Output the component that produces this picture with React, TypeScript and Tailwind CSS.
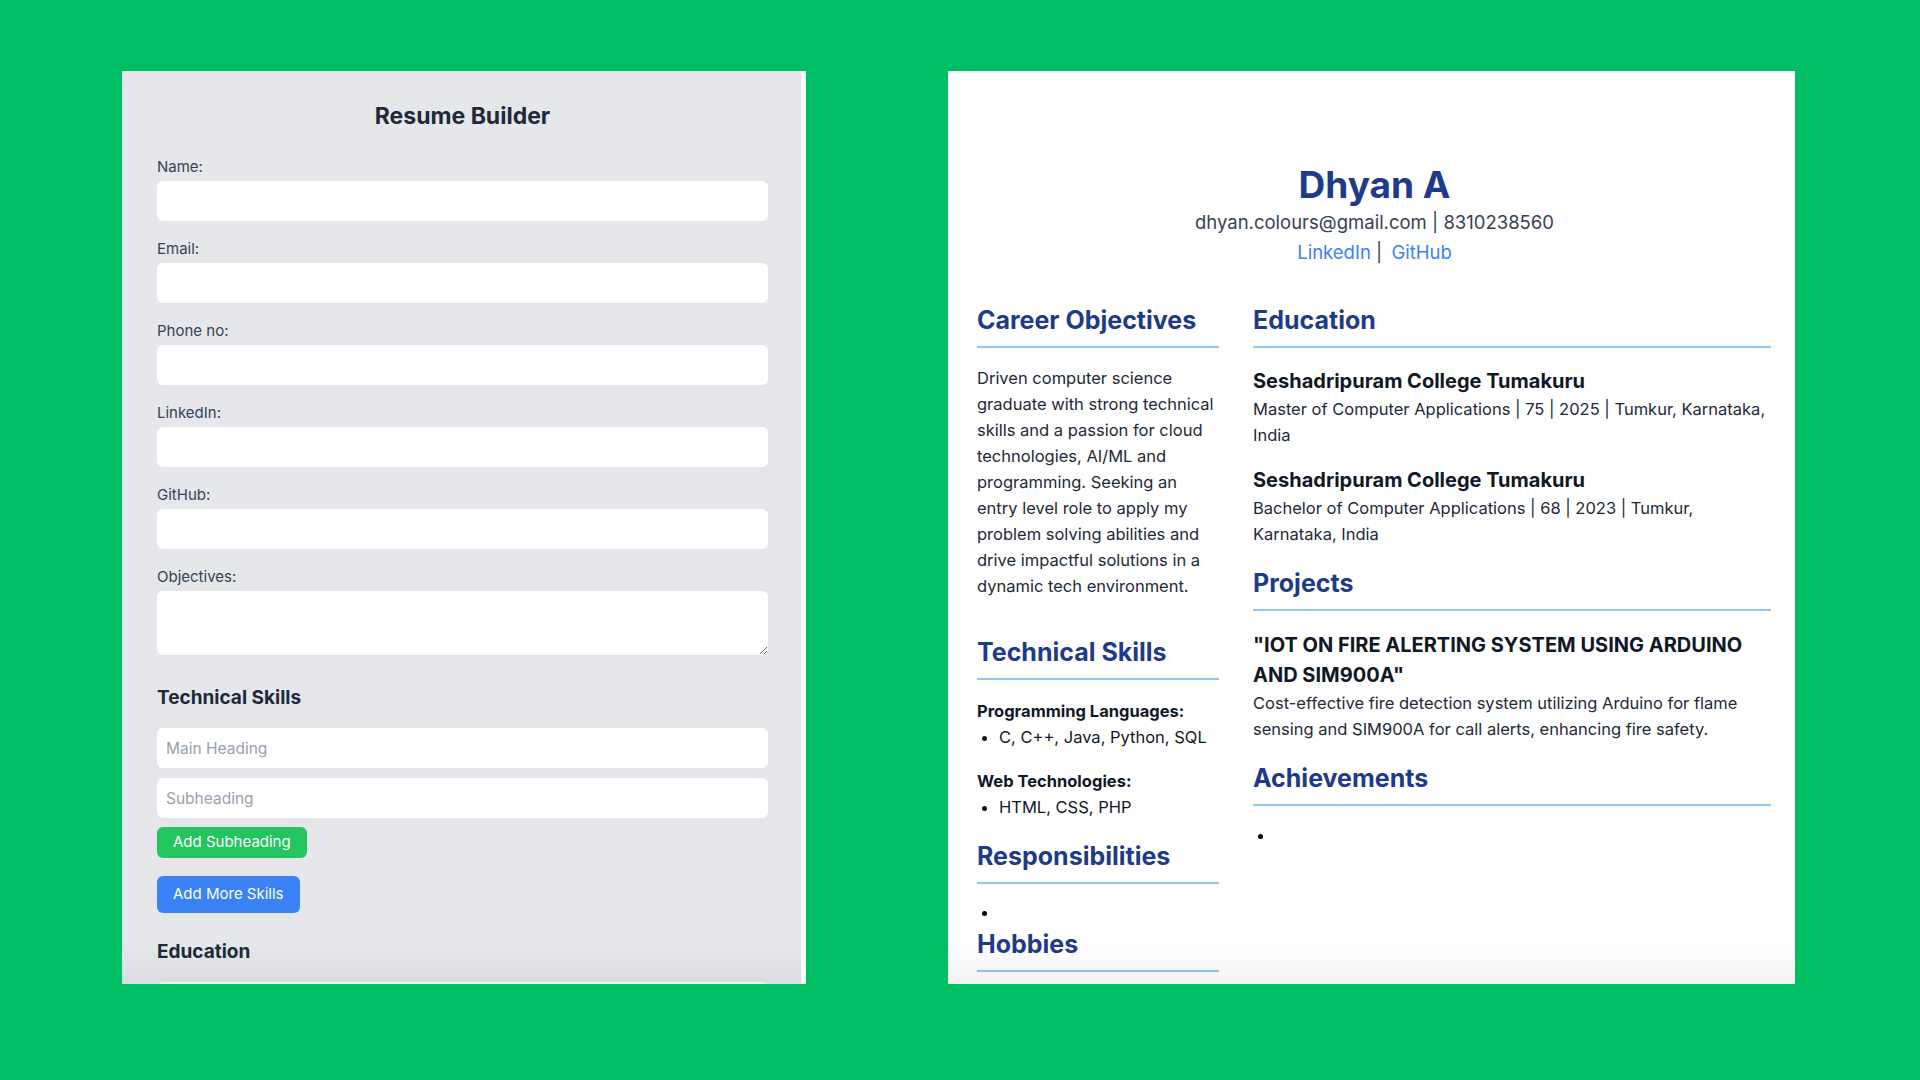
import React from "react";

const font = { fontFamily: "Inter, 'Noto Sans', Arial, sans-serif" };

function Field({ label, tall }: { label: string; tall?: boolean }) {
  return (
    <div className="mb-[18px]">
      <label className="block text-[15px] leading-5 text-gray-700 mb-1">{label}</label>
      {tall ? (
        <textarea className="block w-full h-[64px] rounded-md bg-white resize-y outline-none" />
      ) : (
        <input className="block w-full h-10 rounded-md bg-white outline-none" />
      )}
    </div>
  );
}

function SectionTitle({ children, className = "" }: { children: React.ReactNode; className?: string }) {
  return (
    <h2 className={"text-[25px] leading-8 font-bold text-[#1e3a8a] pb-[10px] border-b-2 border-[#93c5fd] " + className}>
      {children}
    </h2>
  );
}

export default function App() {
  return (
    <div style={font} className="w-[1920px] h-[1080px] bg-[#00be63] flex items-start pt-[71px] pl-[122px] gap-[142px] overflow-hidden">
      {/* form */}
      <div className="relative w-[684px] h-[913px] bg-gray-200 border-r-[5px] border-gray-50 overflow-hidden">
        <div className="pt-[29px] pl-[35px] pr-[33px]">
          <h1 className="text-[23px] leading-8 font-bold text-gray-800 text-center">Resume Builder</h1>
          <div className="mt-[25px]">
            <Field label="Name:" />
            <Field label="Email:" />
            <Field label="Phone no:" />
            <Field label="LinkedIn:" />
            <Field label="GitHub:" />
            <Field label="Objectives:" tall />
          </div>
          <h3 className="mt-[29px] text-[19px] leading-7 font-bold text-gray-800">Technical Skills</h3>
          <input
            placeholder="Main Heading"
            className="mt-[16px] block w-full h-10 rounded-md bg-white px-[9px] text-[15.5px] placeholder:text-gray-400 outline-none"
          />
          <input
            placeholder="Subheading"
            className="mt-[10px] block w-full h-10 rounded-md bg-white px-[9px] text-[15.5px] placeholder:text-gray-400 outline-none"
          />
          <button className="mt-[9px] block h-[31px] px-4 rounded-md bg-[#22c55e] text-white text-[15px]">
            Add Subheading
          </button>
          <button className="mt-[18px] block h-[37px] px-4 rounded-md bg-[#3b82f6] text-white text-[15px]">
            Add More Skills
          </button>
          <h3 className="mt-[25px] text-[19px] leading-7 font-bold text-gray-800">Education</h3>
          <input className="mt-4 block w-full h-10 rounded-md bg-white" />
        </div>
        <div className="absolute left-0 right-0 bottom-0 h-10 bg-gradient-to-b from-transparent to-black/5" />
      </div>

      {/* preview */}
      <div className="relative w-[847px] h-[913px] bg-white overflow-hidden">
        <div className="pt-[94px] pl-[29px] pr-[23px]">
          <div className="text-center">
            <h1 className="text-[37px] leading-10 font-bold text-[#1e3a8a]">Dhyan A</h1>
            <p className="mt-[3px] text-[18.5px] leading-7 text-gray-700">dhyan.colours@gmail.com | 8310238560</p>
            <p className="mt-[2px] text-[18.5px] leading-7 text-gray-700">
              <span className="text-[#3b82f6]">LinkedIn</span> | <span className="text-[#3b82f6] ml-1">GitHub</span>
            </p>
          </div>

          <div className="mt-[38px] flex gap-[34px]">
            <div className="w-[242px] shrink-0">
              <SectionTitle>Career Objectives</SectionTitle>
              <p className="mt-[17px] text-[16.5px] leading-[26px] text-gray-800">
                Driven computer science graduate with strong technical skills and a passion for cloud technologies, AI/ML and
                programming. Seeking an entry level role to apply my problem solving abilities and drive impactful solutions in a
                dynamic tech environment.
              </p>

              <SectionTitle className="mt-[37px]">Technical Skills</SectionTitle>
              <div className="mt-[19px] text-[16.5px] leading-6 text-gray-900">
                <p className="font-bold">Programming Languages:</p>
                <ul className="mt-[2px] list-disc pl-[22px]">
                  <li>C, C++, Java, Python, SQL</li>
                </ul>
                <p className="mt-5 font-bold">Web Technologies:</p>
                <ul className="mt-[2px] list-disc pl-[22px]">
                  <li>HTML, CSS, PHP</li>
                </ul>
              </div>

              <SectionTitle className="mt-[21px]">Responsibilities</SectionTitle>
              <ul className="mt-[15px] list-disc pl-[22px] text-base leading-[26px]">
                <li>&nbsp;</li>
              </ul>
              <SectionTitle className="mt-[3px]">Hobbies</SectionTitle>
            </div>

            <div className="w-[518px] shrink-0">
              <SectionTitle>Education</SectionTitle>
              <div className="mt-[19px]">
                <h4 className="text-xl leading-7 font-bold text-gray-900">Seshadripuram College Tumakuru</h4>
                <p className="mt-[1px] text-[16.5px] leading-[26px] text-gray-800">
                  Master of Computer Applications | 75 | 2025 | Tumkur, Karnataka, India
                </p>
              </div>
              <div className="mt-[18px]">
                <h4 className="text-xl leading-7 font-bold text-gray-900">Seshadripuram College Tumakuru</h4>
                <p className="mt-[1px] text-[16.5px] leading-[26px] text-gray-800">
                  Bachelor of Computer Applications | 68 | 2023 | Tumkur, Karnataka, India
                </p>
              </div>

              <SectionTitle className="mt-5">Projects</SectionTitle>
              <h4 className="mt-[19px] text-xl leading-[30px] font-bold text-gray-900">
                "IOT ON FIRE ALERTING SYSTEM USING ARDUINO AND SIM900A"
              </h4>
              <p className="text-[16.5px] leading-[26px] text-gray-800">
                Cost-effective fire detection system utilizing Arduino for flame sensing and SIM900A for call alerts, enhancing fire
                safety.
              </p>

              <SectionTitle className="mt-5">Achievements</SectionTitle>
              <ul className="mt-[16px] list-disc pl-[22px] text-base leading-[26px]">
                <li>&nbsp;</li>
              </ul>
            </div>
          </div>
        </div>
        <div className="absolute left-0 right-0 bottom-0 h-10 bg-gradient-to-b from-transparent to-black/5" />
      </div>
    </div>
  );
}
